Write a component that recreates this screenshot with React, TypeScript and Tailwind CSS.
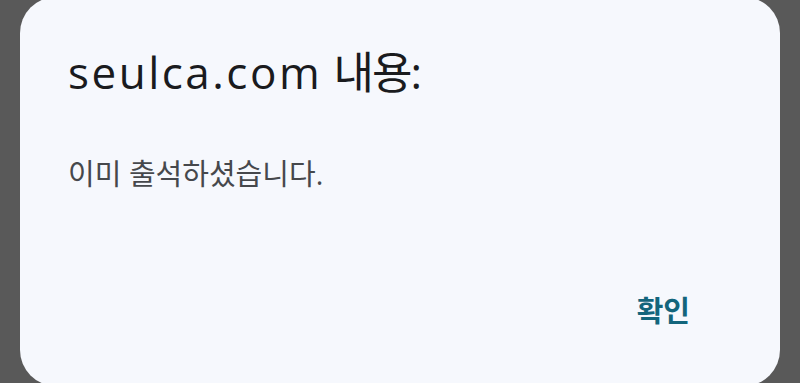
export default function App() {
  return (
    <div className="w-[800px] h-[383px] overflow-hidden bg-[#595959] px-5">
      <div
        className="-mt-[3px] h-[389px] rounded-[36px] bg-[#f6f8fd] flex flex-col pl-[48px] pr-[90px]"
        style={{ fontFamily: '"Open Sans", "Noto Sans CJK KR", sans-serif' }}
      >
        <h1 className="pt-[47px] text-[44px] leading-[56px] text-[#1a1b1e]">
          <span className="tracking-[2.5px]">seulca.com</span> <span className="tracking-[-2px]">내용</span>:
        </h1>
        <p className="pt-[55px] text-[29px] leading-[38px] text-[#46484c]">이미 출석하셨습니다.</p>
        <div className="flex justify-end pt-[99px]">
          <button className="text-[29px] leading-[38px] font-bold text-[#13657c]">확인</button>
        </div>
      </div>
    </div>
  );
}
